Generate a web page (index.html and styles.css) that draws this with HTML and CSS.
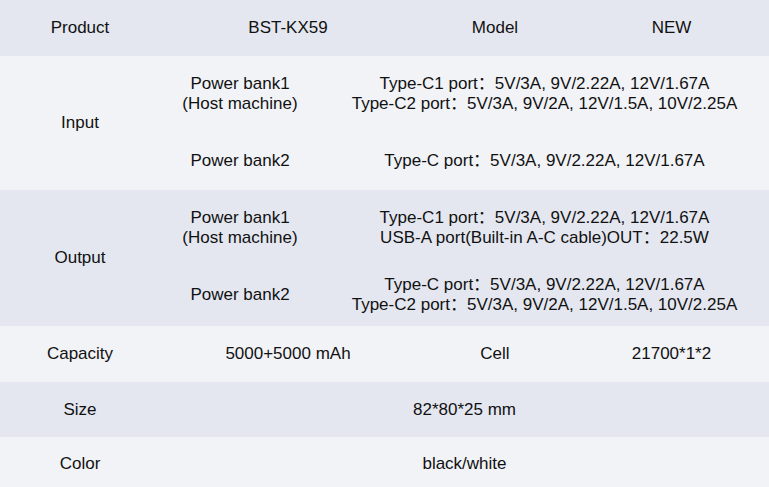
FILE: index.html
```html
<!DOCTYPE html>
<html>
<head>
<meta charset="utf-8">
<link rel="stylesheet" href="styles.css">
</head>
<body>
<div class="spec">
  <div class="row quad dark head">
    <div class="cell">Product</div>
    <div class="cell">BST-KX59</div>
    <div class="cell">Model</div>
    <div class="cell">NEW</div>
  </div>
  <div class="row group light">
    <div class="cell">Input</div>
    <div class="subs">
      <div class="sub in1">
        <div class="cell">Power bank1<br>(Host machine)</div>
        <div class="cell">Type-C1 port：5V/3A, 9V/2.22A, 12V/1.67A<br>Type-C2 port：5V/3A, 9V/2A, 12V/1.5A, 10V/2.25A</div>
      </div>
      <div class="sub in2">
        <div class="cell">Power bank2</div>
        <div class="cell">Type-C port：5V/3A, 9V/2.22A, 12V/1.67A</div>
      </div>
    </div>
  </div>
  <div class="row group dark">
    <div class="cell">Output</div>
    <div class="subs">
      <div class="sub out1">
        <div class="cell">Power bank1<br>(Host machine)</div>
        <div class="cell">Type-C1 port：5V/3A, 9V/2.22A, 12V/1.67A<br>USB-A port(Built-in A-C cable)OUT：22.5W</div>
      </div>
      <div class="sub out2">
        <div class="cell">Power bank2</div>
        <div class="cell">Type-C port：5V/3A, 9V/2.22A, 12V/1.67A<br>Type-C2 port：5V/3A, 9V/2A, 12V/1.5A, 10V/2.25A</div>
      </div>
    </div>
  </div>
  <div class="row quad light r56">
    <div class="cell">Capacity</div>
    <div class="cell">5000+5000 mAh</div>
    <div class="cell">Cell</div>
    <div class="cell">21700*1*2</div>
  </div>
  <div class="row pair dark r55">
    <div class="cell">Size</div>
    <div class="cell">82*80*25 mm</div>
  </div>
  <div class="row pair light r54">
    <div class="cell">Color</div>
    <div class="cell">black/white</div>
  </div>
</div>
</body>
</html>
```
FILE: styles.css
```css
html, body {
  margin: 0;
  padding: 0;
  background: #f2f3f7;
}
body {
  font-family: "Liberation Sans", Arial, "Noto Sans CJK SC", sans-serif;
  font-size: 17px;
  line-height: 20px;
  color: #111;
}
.spec {
  width: 769px;
}
.row {
  display: grid;
}
.dark { background: #e4e7f0; }
.light { background: #f2f3f7; }
.cell {
  display: flex;
  align-items: center;
  justify-content: center;
  text-align: center;
}
.quad {
  grid-template-columns: 160px 256px 158px 1fr;
}
.pair {
  grid-template-columns: 160px 1fr;
}
.head { height: 56px; }
.r56 { height: 56px; }
.r55 { height: 55px; }
.r54 { height: 54px; }
.group {
  grid-template-columns: 160px 1fr;
}
.subs {
  display: flex;
  flex-direction: column;
}
.sub {
  display: grid;
  grid-template-columns: 160px 1fr;
}
.in1 { padding: 18px 0 19px; }
.in2 { padding: 18px 0 19px; }
.out1 { padding: 18px 0 14px; }
.out2 { padding: 13px 0 11px; }
```
